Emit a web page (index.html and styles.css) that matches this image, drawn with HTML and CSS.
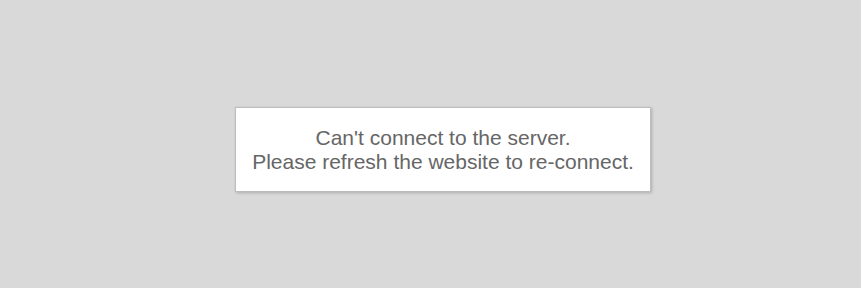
FILE: index.html
```html
<!DOCTYPE html>
<html>
<head>
<meta charset="utf-8">
<link rel="stylesheet" href="styles.css">
</head>
<body>
<div class="overlay">
  <div class="dialog">
    <p class="msg">Can't connect to the server.<br>Please refresh the website to re-connect.</p>
  </div>
</div>
</body>
</html>
```
FILE: styles.css
```css
html, body {
  margin: 0;
  padding: 0;
  height: 100%;
  background: #d9d9d9;
}
.overlay {
  position: fixed;
  inset: 0;
  background: #d9d9d9;
}
.dialog {
  position: absolute;
  left: 235px;
  top: 107px;
  width: 414px;
  height: 83px;
  background: #fff;
  border: 1px solid #bcbcbc;
  box-shadow: 1px 1px 3px rgba(0,0,0,0.2);
  display: flex;
  align-items: center;
  justify-content: center;
}
.msg {
  margin: 0;
  font-family: "Liberation Sans", Arial, sans-serif;
  font-size: 21px;
  line-height: 24px;
  color: #666;
  text-align: center;
}
```
